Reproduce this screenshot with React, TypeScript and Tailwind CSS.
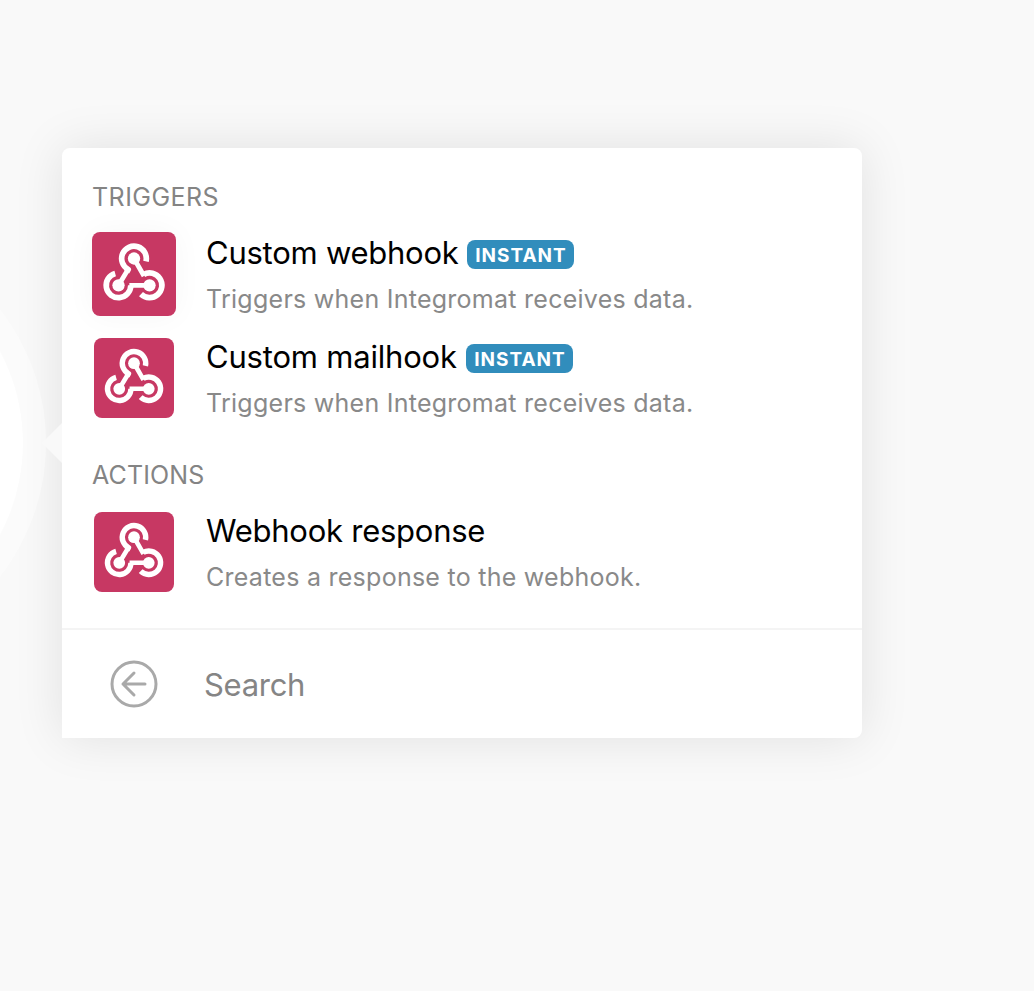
import React from "react";

function WebhookIcon({ className }: { className: string }) {
  return (
    <svg viewBox="0 0 252 252" className={className} fill="none" stroke="#fff" strokeWidth="17">
      <g fill="#fff" stroke="none">
        <circle cx="126" cy="79.500" r="18.500" />
        <circle cx="79.500" cy="160" r="18.500" />
        <circle cx="172.500" cy="160" r="18.500" />
      </g>
      <path d="M162 88A37 37 0 1 0 108.600 112.300L104 120" strokeLinejoin="round" />
      <path d="M69.600 124.300A37 37 0 1 0 116.500 160" />
      <path d="M147 186.400A37 37 0 1 0 155.100 127.300" />
      <path strokeWidth="14.500" d="M108.600 112L79.500 160M112 160H172.500M126 79.500L156 132" />
    </svg>
  );
}

interface ItemProps {
  title: string;
  description: string;
  instant?: boolean;
  active?: boolean;
  titleClass: string;
}

function Item({ title, description, instant, active, titleClass }: ItemProps) {
  return (
    <div className="flex h-[104px] items-start">
      <div className="flex w-[84px] shrink-0 justify-center">
        <div
          className={
            active
              ? "-mt-0.5 size-[84px] rounded-lg bg-[#c73863] shadow-[0_0_30px_rgba(0,0,0,0.04)]"
              : "size-20 rounded-lg bg-[#c73863]"
          }
        >
          <WebhookIcon className="size-full" />
        </div>
      </div>
      <div className="-mt-px ml-[30px] whitespace-nowrap">
        <div className="flex h-10 items-center">
          <span className={titleClass}>{title}</span>
          {instant && (
            <span className="ml-[9px] mt-0.5 flex h-[29px] w-[107px] items-center justify-center rounded-lg bg-[#318dbc] pl-px pt-1 text-[19px] font-bold tracking-[1px] text-white">
              INSTANT
            </span>
          )}
        </div>
        <div className="mt-[7px] text-[25px] leading-[38px] tracking-[0.26px] text-[#898989]">{description}</div>
      </div>
    </div>
  );
}

export default function App() {
  return (
    <main className="relative flex h-[991px] w-[1034px] overflow-hidden bg-[#f9f9f9] pl-[62px] pt-[148px] font-['Inter',sans-serif]">
      <section className="h-[590px] w-[800px] rounded-lg rounded-bl-none bg-white shadow-[0_0_50px_rgba(0,0,0,0.1)]">
        <div className="h-[480px] pl-[30px] pt-[30px]">
          <h2 className="h-14 text-[25px] leading-[38px] tracking-[0.45px] text-[#848484]">TRIGGERS</h2>
          <Item
            title="Custom webhook"
            description="Triggers when Integromat receives data."
            instant
            active
            titleClass="w-[252px] text-[31px] leading-10 tracking-[-0.25px]"
          />
          <Item
            title="Custom mailhook"
            description="Triggers when Integromat receives data."
            instant
            titleClass="w-[251px] text-[31px] leading-10 tracking-[-0.2px]"
          />
          <h2 className="mt-3.5 h-14 text-[25px] leading-[38px] tracking-[0.15px] text-[#848484]">ACTIONS</h2>
          <Item
            title="Webhook response"
            description="Creates a response to the webhook."
            titleClass="text-[31px] leading-10 tracking-[-0.25px]"
          />
        </div>
        <div className="flex h-[110px] items-center border-t-2 border-[#f4f4f4] pl-12">
          <svg viewBox="0 0 48 48" className="size-12" fill="none" stroke="#a9a9a9" strokeWidth="3" strokeLinecap="round" strokeLinejoin="round">
            <circle cx="24" cy="24" r="22" />
            <path d="M35 24H13M24 13L13 24L24 35" />
          </svg>
          <span className="ml-[46px] mt-0.5 text-[31px] leading-10 tracking-[-0.3px] text-[#858585]">Search</span>
        </div>
      </section>
      <div className="absolute left-[-388px] top-[226px] size-[434px] rounded-full border-[23px] border-white/40 bg-white bg-clip-padding" />
      <svg viewBox="0 0 20 40" className="absolute left-[42px] top-[423px] h-10 w-5" fill="#f9f9f9">
        <path d="M20 0V40L0 20Z" />
      </svg>
    </main>
  );
}
